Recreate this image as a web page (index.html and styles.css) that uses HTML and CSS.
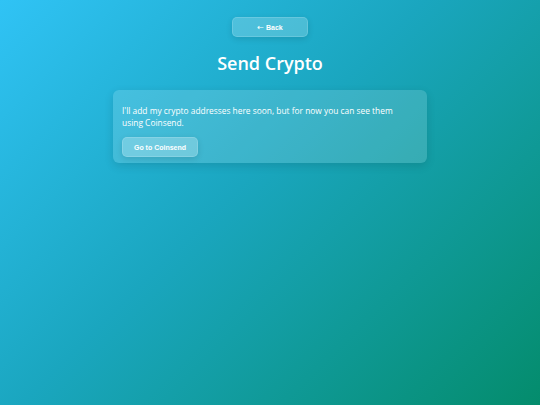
FILE: index.html
```html
<!DOCTYPE html>
<html>
<head>
<meta charset="utf-8">
<link rel="stylesheet" href="styles.css">
</head>
<body>
<div class="page">
  <a class="btn back"><span class="arrow">←</span> Back</a>
  <h1 class="title">Send Crypto</h1>
  <div class="card">
    <p class="text">I'll add my crypto addresses here soon, but for now you can see them using Coinsend.</p>
    <a class="btn go">Go to Coinsend</a>
  </div>
</div>
</body>
</html>
```
FILE: styles.css
```css
html, body {
  margin: 0;
  padding: 0;
  height: 100%;
}
body {
  background: linear-gradient(135deg, #30c3f5 0%, #1aa6bf 45%, #048c6c 100%);
  font-family: "Open Sans", sans-serif;
  color: #fff;
}
.page {
  display: flex;
  flex-direction: column;
  align-items: center;
  padding-top: 17px;
}
.btn {
  display: flex;
  align-items: center;
  justify-content: center;
  gap: 2px;
  width: 76px;
  height: 20px;
  box-sizing: border-box;
  border-radius: 5px;
  background: rgba(255, 255, 255, 0.2);
  border: 1px solid rgba(255, 255, 255, 0.15);
  box-shadow: 0 2px 6px rgba(0, 0, 0, 0.12);
  font-family: "Liberation Sans", Arial, sans-serif;
  font-weight: bold;
  font-size: 7px;
  color: #fff;
}
.arrow {
  font-family: "DejaVu Sans", sans-serif;
  font-weight: normal;
  font-size: 8px;
}
.title {
  margin: 14px 0 0;
  font-size: 18px;
  font-weight: 600;
  line-height: 24px;
}
.card {
  margin-top: 15px;
  width: 314px;
  box-sizing: border-box;
  padding: 15px 26px 6px 9px;
  border-radius: 6px;
  background: rgba(255, 255, 255, 0.15);
  box-shadow: 0 3px 10px rgba(0, 0, 0, 0.12);
}
.text {
  margin: 0;
  font-size: 8.4px;
  font-weight: 400;
  line-height: 12px;
}
.go {
  margin-top: 8px;
  background: rgba(255, 255, 255, 0.25);
}
```
